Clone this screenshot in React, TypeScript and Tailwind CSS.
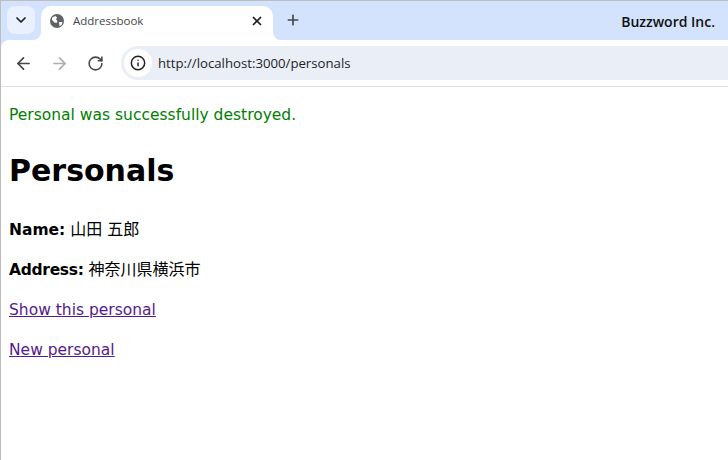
import { ArrowLeft, ArrowRight, ChevronDown, Info, Plus, RotateCw, X } from "lucide-react"

const uiFont = { fontFamily: '"Open Sans", sans-serif' }
const pageFont = { fontFamily: '"DejaVu Sans", "Noto Sans CJK JP", sans-serif' }

function Globe() {
  return (
    <svg width="14" height="14" viewBox="0 0 14 14" className="shrink-0">
      <circle cx="7" cy="7" r="7" fill="#5f6368" />
      <path d="M2 3.5 L5.5 2 L7 3.5 L6 5.5 L7.5 7 L6.5 9 L4.5 8.5 L2 6 Z" fill="#fff" />
      <path d="M9 8 L12.5 8 L11.5 11 L9.5 12.2 Z" fill="#fff" />
    </svg>
  )
}

export default function App() {
  return (
    <div className="w-[728px] h-[460px] overflow-hidden bg-white border-l border-[#bdbdbd] flex flex-col">
      <div className="h-10 shrink-0 bg-[#d3e3fd] border-t border-[#bdbdbd] flex items-end">
        <div className="w-7 h-7 ml-[6px] mb-[6px] rounded-lg bg-[#e9f0fe] flex items-center justify-center">
          <ChevronDown size={16} strokeWidth={2.6} className="text-[#1f1f1f]" />
        </div>
        <div className="relative w-[232px] h-[34px] ml-[6px] rounded-t-[10px] bg-white flex items-center pl-[9px] pr-[9px] pb-1">
          <span className="absolute -left-2 bottom-0 w-2 h-2 bg-white">
            <span className="block w-2 h-2 bg-[#d3e3fd] rounded-br-lg" />
          </span>
          <span className="absolute -right-2 bottom-0 w-2 h-2 bg-white">
            <span className="block w-2 h-2 bg-[#d3e3fd] rounded-bl-lg" />
          </span>
          <Globe />
          <span className="ml-[9px] flex-1 text-[11.5px] text-[#45474a]" style={uiFont}>Addressbook</span>
          <X size={14} strokeWidth={3} className="text-[#1f1f1f] -mt-px" />
        </div>
        <div className="ml-3 mb-3 text-[#444746]">
          <Plus size={16} strokeWidth={2.5} />
        </div>
        <div className="flex-1 self-center flex justify-end pr-[13px] pt-[2px] text-sm font-semibold text-[#111]" style={uiFont}>
          Buzzword Inc.
        </div>
      </div>
      <div className="bg-[#d3e3fd] shrink-0">
        <div className="h-[47px] bg-white border-b border-[#e0e0e0] rounded-tl-lg flex items-center pl-[13px]">
          <ArrowLeft size={19} strokeWidth={2.2} className="text-[#474747]" />
          <ArrowRight size={19} strokeWidth={2.2} className="ml-[17px] text-[#adadad]" />
          <RotateCw size={17} strokeWidth={2.2} className="ml-[18px] text-[#474747]" />
          <div className="ml-[17px] flex-1 h-[34px] bg-[#eaeef7] rounded-l-full flex items-center pl-[3px]">
            <div className="w-7 h-7 rounded-full bg-white flex items-center justify-center">
              <Info size={16} strokeWidth={2.2} className="text-[#1f1f1f]" />
            </div>
            <span className="ml-[6px] mt-px text-[13.2px] text-[#1f1f1f]" style={uiFont}>http://localhost:3000/personals</span>
          </div>
        </div>
      </div>
      <main className="flex-1 pl-2 text-[15.5px] text-black" style={pageFont}>
        <p className="mt-4 text-[#008000] leading-6">Personal was successfully destroyed.</p>
        <h1 className="mt-5 text-[30px] leading-[48px] font-bold">Personals</h1>
        <p className="mt-[23px] leading-6"><strong>Name:</strong> <span className="text-base">山田 五郎</span></p>
        <p className="mt-4 leading-6"><strong className="tracking-[-0.3px]">Address:</strong> <span className="text-base">神奈川県横浜市</span></p>
        <p className="mt-4 leading-6"><a href="#" className="underline text-[#551a8b]">Show this personal</a></p>
        <p className="mt-4 leading-6"><a href="#" className="underline text-[#551a8b]">New personal</a></p>
      </main>
    </div>
  )
}
